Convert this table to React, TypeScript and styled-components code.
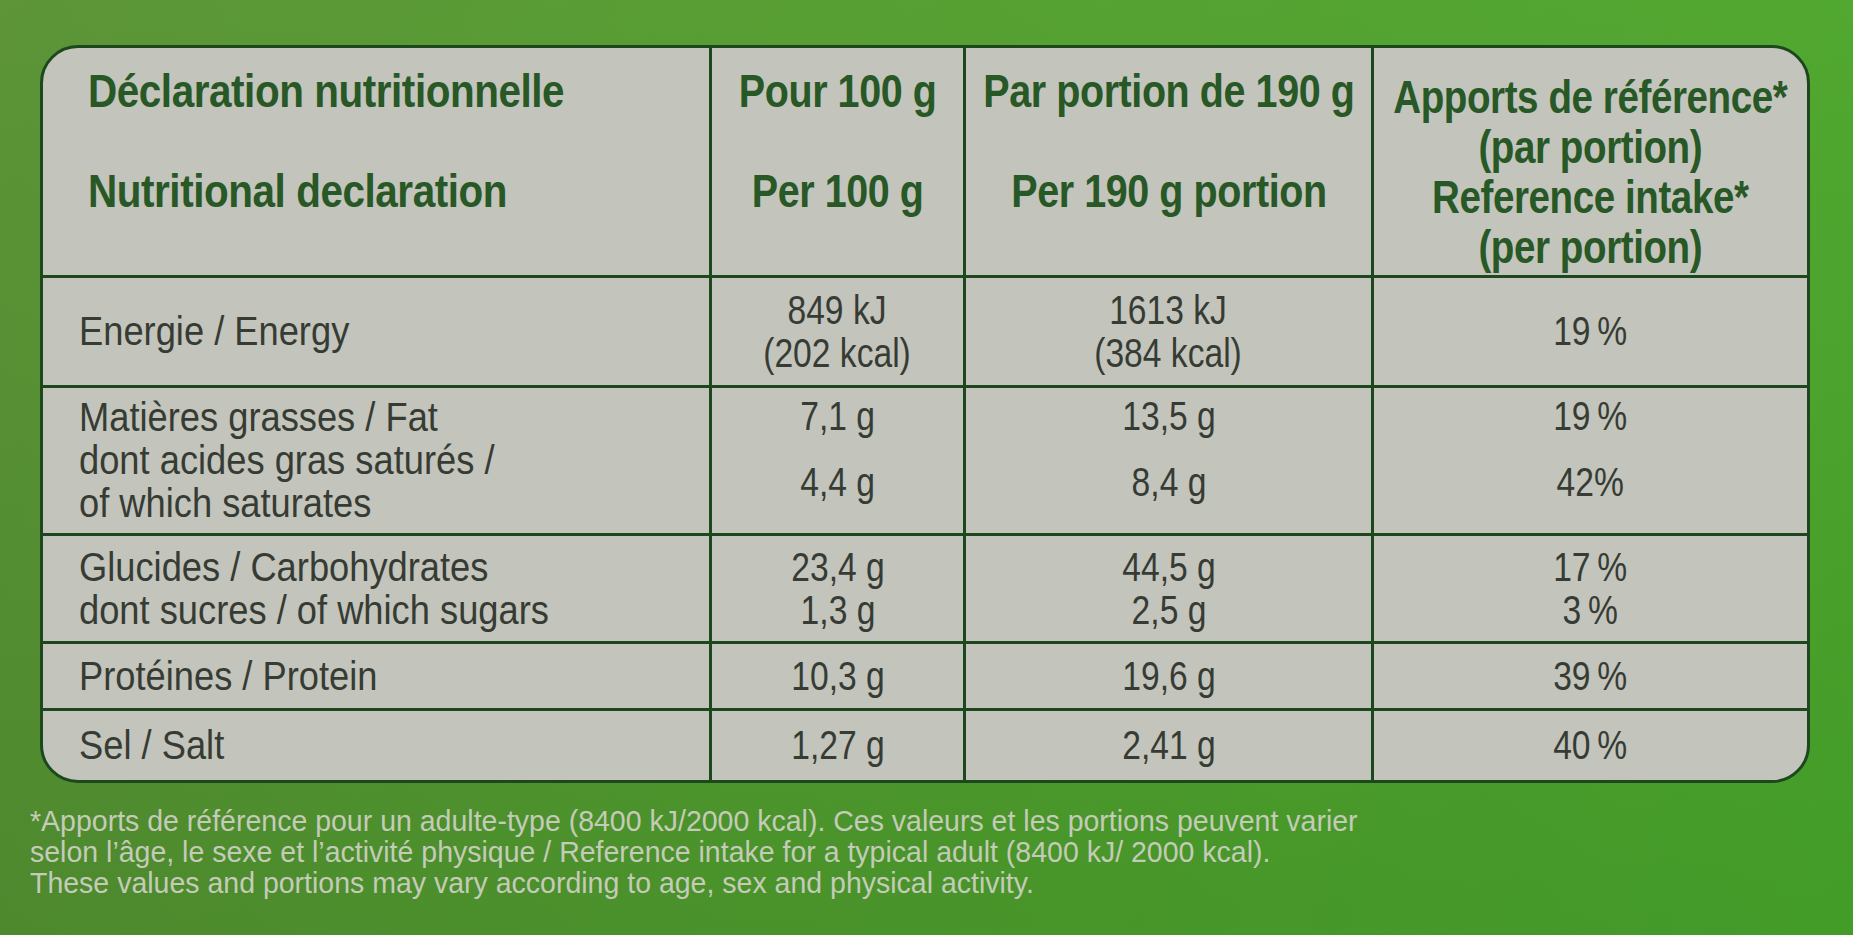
import { Fragment } from "react";
import styled, { createGlobalStyle } from "styled-components";

const GlobalStyle = createGlobalStyle`
  html, body {
    margin: 0;
    padding: 0;
  }
  body {
    width: 1853px;
    height: 935px;
    overflow: hidden;
    font-family: "Liberation Sans", Arial, sans-serif;
  }
`;

// the label face is a condensed sans, so the text is squeezed horizontally
const HEAD_SQUEEZE = 0.84;
const LABEL_SQUEEZE = 0.885;
const VALUE_SQUEEZE = 0.82;

type Row = {
  label: string[];
  per100: string[];
  portion: string[];
  ri: string[];
  spread?: boolean;
};

const pct = (n: number) => `${n}\u202F%`;

const rows: Row[] = [
  {
    label: ["Energie / Energy"],
    per100: ["849 kJ", "(202 kcal)"],
    portion: ["1613 kJ", "(384 kcal)"],
    ri: [pct(19)],
  },
  {
    label: ["Matières grasses / Fat", "dont acides gras saturés /", "of which saturates"],
    per100: ["7,1 g", "4,4 g"],
    portion: ["13,5 g", "8,4 g"],
    ri: [pct(19), "42%"],
    spread: true,
  },
  {
    label: ["Glucides / Carbohydrates", "dont sucres / of which sugars"],
    per100: ["23,4 g", "1,3 g"],
    portion: ["44,5 g", "2,5 g"],
    ri: [pct(17), pct(3)],
  },
  {
    label: ["Protéines / Protein"],
    per100: ["10,3 g"],
    portion: ["19,6 g"],
    ri: [pct(39)],
  },
  {
    label: ["Sel / Salt"],
    per100: ["1,27 g"],
    portion: ["2,41 g"],
    ri: [pct(40)],
  },
];

const App = () => {
  return (
    <Page>
      <GlobalStyle />
      <Table>
        <HeadCell $align="left">
          <HeadPair $origin="left" $scale={0.86}>
            <span>Déclaration nutritionnelle</span>
            <span>Nutritional declaration</span>
          </HeadPair>
        </HeadCell>
        <HeadCell $align="center">
          <HeadPair $origin="center" $scale={HEAD_SQUEEZE}>
            <span>Pour 100 g</span>
            <span>Per 100 g</span>
          </HeadPair>
        </HeadCell>
        <HeadCell $align="center">
          <HeadPair $origin="center" $scale={HEAD_SQUEEZE}>
            <span>Par portion de 190 g</span>
            <span>Per 190 g portion</span>
          </HeadPair>
        </HeadCell>
        <HeadCell $align="center">
          <HeadStack>
            <span>Apports de référence*</span>
            <span>(par portion)</span>
            <span>Reference intake*</span>
            <span>(per portion)</span>
          </HeadStack>
        </HeadCell>

        {rows.map((row) => (
          <Fragment key={row.label[0]}>
            <BodyCell $align="left">
              <Lines $scale={LABEL_SQUEEZE} $origin="left">
                {row.label.map((l) => (
                  <span key={l}>{l}</span>
                ))}
              </Lines>
            </BodyCell>
            {[row.per100, row.portion, row.ri].map((vals, i) => (
              <BodyCell key={i} $align="center">
                <Lines $scale={VALUE_SQUEEZE} $origin="center" $spread={row.spread}>
                  {vals.map((v) => (
                    <span key={v}>{v}</span>
                  ))}
                </Lines>
              </BodyCell>
            ))}
          </Fragment>
        ))}
      </Table>
      <Footnote>
        *Apports de référence pour un adulte-type (8400 kJ/2000 kcal). Ces valeurs et les portions peuvent varier
        <br />
        selon l’âge, le sexe et l’activité physique / Reference intake for a typical adult (8400 kJ/ 2000 kcal).
        <br />
        These values and portions may vary according to age, sex and physical activity.
      </Footnote>
    </Page>
  );
};

export default App;

const Page = styled.div`
  box-sizing: border-box;
  width: 1853px;
  height: 935px;
  padding: 45px 43px 0 40px;
  background:
    linear-gradient(180deg, rgba(255, 255, 160, 0.05) 0%, rgba(0, 0, 0, 0.06) 100%),
    linear-gradient(100deg, #548f32 0%, #4e9b2d 45%, #47a52a 100%);
`;

const Table = styled.div`
  display: grid;
  grid-template-columns: 669px 254px 408px minmax(0, 1fr);
  grid-template-rows: 230px 110px 148px 108px 67px 69px;
  background: #c3c4bc;
  border: 3px solid #1d481d;
  border-radius: 38px;
  overflow: hidden;
  color: #363c34;

  & > div {
    min-width: 0;
    border-right: 3px solid #1d481d;
    border-bottom: 3px solid #1d481d;
  }
  & > div:nth-child(4n) {
    border-right: none;
  }
  & > div:nth-last-child(-n + 4) {
    border-bottom: none;
  }
`;

const HeadCell = styled.div<{ $align: "left" | "center" }>`
  display: flex;
  justify-content: ${(p) => (p.$align === "left" ? "flex-start" : "center")};
  text-align: ${(p) => p.$align};
  padding: ${(p) => (p.$align === "left" ? "0 0 0 45px" : "0")};
  color: #285826;
  font-weight: 700;
  font-size: 47px;
  line-height: 50px;
  letter-spacing: -0.5px;
  white-space: nowrap;
`;

const HeadPair = styled.div<{ $origin: "left" | "center"; $scale: number }>`
  display: flex;
  flex-direction: column;
  gap: 50px;
  padding-top: 18px;
  transform: scaleX(${(p) => p.$scale});
  transform-origin: ${(p) => p.$origin} top;
`;

const HeadStack = styled.div`
  display: flex;
  flex-direction: column;
  padding-top: 24px;
  transform: scaleX(0.82);
`;

const BodyCell = styled.div<{ $align: "left" | "center" }>`
  display: flex;
  align-items: center;
  justify-content: ${(p) => (p.$align === "left" ? "flex-start" : "center")};
  text-align: ${(p) => p.$align};
  padding-left: ${(p) => (p.$align === "left" ? "36px" : "0")};
  font-size: 41px;
  line-height: 43px;
  white-space: nowrap;
`;

const Lines = styled.div<{ $scale: number; $origin: "left" | "center"; $spread?: boolean }>`
  display: flex;
  flex-direction: column;
  gap: ${(p) => (p.$spread ? "23px" : "0")};
  align-self: ${(p) => (p.$spread ? "flex-start" : "auto")};
  padding-top: ${(p) => (p.$spread ? "7px" : "0")};
  transform: scaleX(${(p) => p.$scale});
  transform-origin: ${(p) => p.$origin} center;
`;

const Footnote = styled.p`
  margin: 22px 0 0 -10px;
  color: #c4cbb8;
  font-size: 30px;
  line-height: 31px;
  white-space: nowrap;
  transform: scaleX(0.95);
  transform-origin: left top;
`;
